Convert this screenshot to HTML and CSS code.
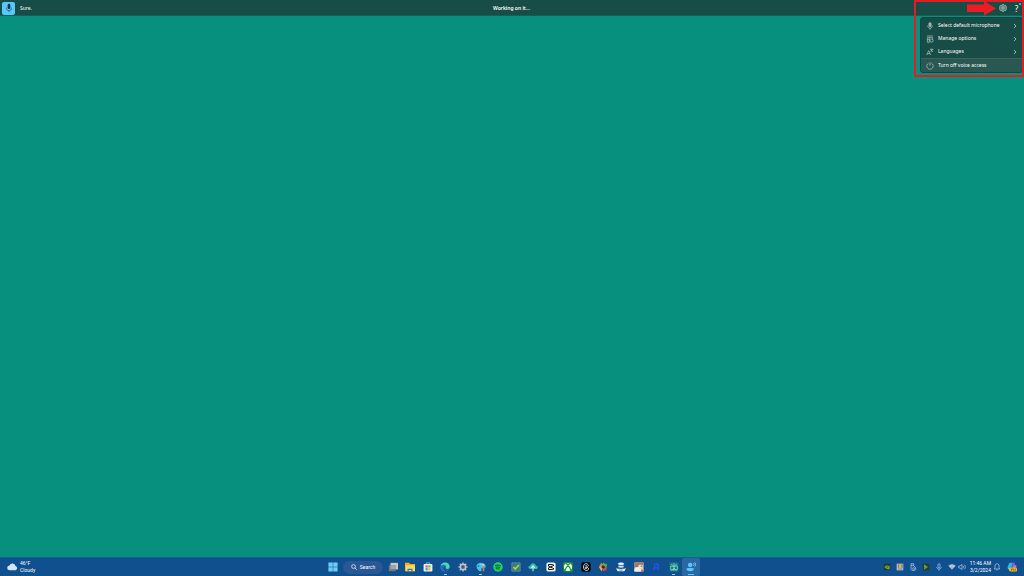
FILE: index.html
```html
<!DOCTYPE html>
<html lang="en">
<head>
<meta charset="utf-8">
<title>Voice access</title>
<link rel="stylesheet" href="styles.css">
</head>
<body>
<div class="desktop">
  <header class="voice-bar">
    <div class="voice-left">
      <button class="mic-button" aria-label="Microphone"><svg class="icon" viewBox="0 0 12 12"><rect x="4.400" y="1" width="3.200" height="6.200" rx="1.600" fill="#123247"/><path d="M3 5.500v.7a3 3 0 0 0 6 0v-.7M6 9.200V11" fill="none" stroke="#246685"/></svg></button>
      <span>Sure.</span>
    </div>
    <strong class="voice-status">Working on it...</strong>
    <div class="voice-right">
      <button class="bar-button" aria-label="Settings"><svg class="icon-8" viewBox="0 0 12 12" fill="none" stroke="#b9cdca"><path d="M4.500 1h3l.6 1.600 1.800-.3 1.500 2.500L10.300 6l1.100 1.200-1.500 2.500-1.800-.3L7.500 11h-3l-.6-1.600-1.800.3L.6 7.200 1.700 6 .6 4.800l1.500-2.500 1.800.3z" fill="#527a75"/><circle cx="6" cy="6" r="1.800"/></svg></button>
      <button class="bar-button help" aria-label="Help">?</button>
    </div>
  </header>

  <main class="workspace"></main>

  <nav class="menu" aria-label="Settings">
    <button class="menu-item"><svg class="icon-8" viewBox="0 0 12 12" fill="none" stroke="#b9cdca"><rect x="4.300" y="1" width="3.400" height="6" rx="1.700" fill="#8fa9a6"/><path d="M2.500 5.500c0 5 7 5 7 0M6 9v2.500"/></svg><span>Select default microphone</span><svg class="chevron" viewBox="0 0 4 6"><path d="m1 1 2 2-2 2" fill="none" stroke="#b9cdca" stroke-width=".8"/></svg></button>
    <button class="menu-item"><svg class="icon-8" viewBox="0 0 12 12" fill="none" stroke="#b9cdca"><path d="M1.500 1.500h9M2 4v7h3M2 4h8v2M5 4v7M2 7h3"/><circle cx="8.500" cy="8.500" r="2.200"/></svg><span>Manage options</span><svg class="chevron" viewBox="0 0 4 6"><path d="m1 1 2 2-2 2" fill="none" stroke="#b9cdca" stroke-width=".8"/></svg></button>
    <button class="menu-item"><svg class="icon-8" viewBox="0 0 12 12" fill="none" stroke="#b9cdca"><path d="M1 10.500 4 4l3 6.500M2 8.500h4M6 2h5M8.500 1v1M7 6l3-4M7.500 3l3 3"/></svg><span>Languages</span><svg class="chevron" viewBox="0 0 4 6"><path d="m1 1 2 2-2 2" fill="none" stroke="#b9cdca" stroke-width=".8"/></svg></button>
    <button class="menu-item menu-off"><svg class="icon-8" viewBox="0 0 12 12" fill="none" stroke="#b9cdca"><path d="M3.800 1.800a4.800 4.800 0 1 0 4.400 0M6 .5v5"/></svg><span>Turn off voice access</span></button>
  </nav>
  <div class="highlight"></div>
  <svg class="arrow" viewBox="0 0 29 16"><path d="M0 4.500h17V1l12 7.500L17 15.500V12H0z" fill="#ed1c24"/></svg>
  <i class="notice"></i>

  <footer class="taskbar">
    <button class="weather"><svg class="weather-icon" viewBox="0 0 12 12"><path d="M3 10a2.600 2.600 0 0 1-.3-5.200 3.500 3.500 0 0 1 6.600.6A2.400 2.400 0 0 1 9.500 10z" fill="#d5e5fb"/></svg><span>46°F<br>Cloudy</span></button>

    <div class="center">
      <button class="start" aria-label="Start"><svg class="icon" viewBox="0 0 12 12" fill="#6bcefa"><path d="M.5.500h5.200v5.200H.500zM6.300.500h5.200v5.200H6.300zM.5 6.300h5.200v5.200H.500zM6.300 6.300h5.200v5.200H6.300z"/></svg></button>
      <button class="search"><svg class="icon-6" viewBox="0 0 12 12" fill="none" stroke="#e2eaf5" stroke-width="1.600"><circle cx="5" cy="5" r="3.800"/><path d="m8 8 3.500 3.500"/></svg><span>Search</span></button>
      <div class="apps">
        <button class="app" aria-label="Task view"><svg class="icon" viewBox="0 0 12 12"><path d="M3 1h9v8H3z" fill="#c9c6c4"/><path d="M1 4h8v7H1z" fill="#77797b"/><path d="M3 4h6v4.500H3z" fill="#a5a4a4"/></svg></button>
        <button class="app" aria-label="File Explorer"><svg class="icon" viewBox="0 0 12 12"><path d="M0 1h5l1 1.500h6V11H0z" fill="#f4b31d"/><path d="M1 4h11v7H1z" fill="#ffd95c"/><path d="M3 11V8h6v3H7.500V9.500h-3V11z" fill="#247bce"/></svg></button>
        <button class="app" aria-label="Microsoft Store"><svg class="icon" viewBox="0 0 12 12"><path d="M4 3V1h4v2" fill="none" stroke="#6cc8f5"/><rect x=".7" y="2.500" width="10.600" height="9" rx="1" fill="#edf1f5"/><path d="M3 4h2.700v2.700H3z" fill="#f05b35"/><path d="M6.300 4H9v2.700H6.300z" fill="#80bb3d"/><path d="M3 7.300h2.700V10H3z" fill="#27a8e8"/><path d="M6.300 7.300H9V10H6.300z" fill="#fbbc2d"/></svg></button>
        <button class="app open" aria-label="Edge"><svg class="icon" viewBox="0 0 12 12"><circle cx="6" cy="6" r="5.500" fill="#168bd7"/><path d="M.8 5C1.500-1 11.500-.5 11.500 5.500 11.500 9 7 9 7 7c2-4-4-5-6.200-2z" fill="#54d5ae"/><path d="M1 5c3-3 7 0 5.500 2-.5 2 2 3 4 2-3 4-9 2-9.500-4z" fill="#1177cb"/><path d="M5 5.500c-2 1-1 4 1 5.500 2 .2 4-1 4.800-2.500-2 1-4.300.5-4.300-1.500 0-1-.5-1.500-1.500-1.500z" fill="#24507e"/></svg></button>
        <button class="app" aria-label="Settings app"><svg class="icon" viewBox="0 0 12 12"><path d="M6 .5v11M.5 6h11M2.100 2.100l7.800 7.800M9.900 2.100 2.100 9.900" stroke="#a8b0ba" stroke-width="2"/><circle cx="6" cy="6" r="3.200" fill="#56697c" stroke="#bdc3c9" stroke-width="1.800"/><circle cx="6" cy="6" r="1.200" fill="#275b99"/></svg></button>
        <button class="app open" aria-label="Paint"><svg class="icon" viewBox="0 0 12 12"><path d="M1 7C-1 2 5-.5 9 1.500c4 2 3 6 0 6H7c-2 1 1 3-1 3.500C4 11.500 2 10 1 7z" fill="#50bce8"/><circle cx="3" cy="5" r="1" fill="#187bc2"/><circle cx="5.500" cy="3" r="1" fill="#96dd8e"/><circle cx="8.500" cy="3.500" r="1" fill="#dceaf4"/><path d="m10 3-2 4v4h2V7z" fill="#d87a3b"/></svg></button>
        <button class="app" aria-label="Spotify"><svg class="icon" viewBox="0 0 12 12"><circle cx="6" cy="6" r="5.700" fill="#1ed760"/><path d="M2.500 4.200c3-.8 5-.5 7 .6M3 6.300c2.500-.6 4-.3 5.800.6M3.300 8.200c2-.4 3.300-.1 4.700.5" fill="none" stroke="#123e2b" stroke-width="1.100"/></svg></button>
        <button class="app" aria-label="Tasks"><svg class="icon" viewBox="0 0 12 12"><path d="M1 1h10v10H1z" fill="#397d78" stroke="#6689a1"/><path d="m3 6 2 2.500 4.500-5" fill="none" stroke="#a9dc3e" stroke-width="1.800"/></svg></button>
        <button class="app" aria-label="Cloud upload"><svg class="icon" viewBox="0 0 12 12"><path d="M2.500 8.500C-.5 8 0 4.500 2.500 4.500 4 0 9 1 9.500 4.500c3 .2 3 3.800 0 4z" fill="#39bba5"/><path d="M6 11V6M3.800 7 6 4.500 8.200 7" fill="none" stroke="#b8fff0" stroke-width="1.300"/></svg></button>
        <button class="app" aria-label="CapCut"><svg class="icon" viewBox="0 0 12 12"><rect x=".5" y=".5" width="11" height="11" rx="2" fill="#f3f3f3"/><path d="M9.500 4 8 3H3v2l6.500 3M9.500 8 8 9H3V7l6.500-3" fill="none" stroke="#171717" stroke-width="1.200"/></svg></button>
        <button class="app" aria-label="Xbox"><svg class="icon" viewBox="0 0 12 12"><rect x=".3" y=".3" width="11.400" height="11.400" rx="1" fill="#149b26"/><circle cx="6" cy="6" r="4.800" fill="#f5fff5"/><path d="M3 2c1 0 2 .6 3 1.300C7 2.600 8 2 9 2M2.500 10C3 7.500 4.500 5.500 6 4.500 7.500 5.500 9 7.500 9.500 10" fill="none" stroke="#149b26" stroke-width="1.500"/></svg></button>
        <button class="app" aria-label="Threads"><svg class="icon" viewBox="0 0 12 12"><rect x=".3" y=".3" width="11.400" height="11.400" rx="2" fill="#080a0d"/><path d="M9 4.500C8 1 3 1 3 6s5.500 5 6 2.500C9.500 6 5 5.500 4.700 7.200 5 9 8 8.200 7.300 5.500 7 4 5.500 4 5 5" fill="none" stroke="#edf0f1"/></svg></button>
        <button class="app" aria-label="Color tools"><svg class="icon" viewBox="0 0 12 12"><circle cx="6" cy="6" r="5.200" fill="#343a3e"/><path d="M1 5 4 1l3 2-3 4z" fill="#d47b50"/><path d="m6 1 5 2-1 4-4-3z" fill="#57ad63"/><path d="m1 6 3 5 2-3-2-3z" fill="#d3bd53"/><path d="m6 7 5-1-1 4-4 1z" fill="#c44d76"/><circle cx="6" cy="6" r="1.800" fill="#282e38"/></svg></button>
        <button class="app" aria-label="Voice recorder"><svg class="icon" viewBox="0 0 12 12"><path d="M2 2c2-2 6-2 8 0L8 4H4z" fill="#eef4fb"/><ellipse cx="6" cy="5.500" rx="3.500" ry="1.500" fill="#c5d8ec"/><path d="M0 7.500c3 1 9 1 12 0L10 11H2z" fill="#e8eff7"/><path d="M4 9.500c1 .5 3 .5 4 0M3 4h6" stroke="#4773a2" fill="none"/></svg></button>
        <button class="app" aria-label="Photo editor"><svg class="icon" viewBox="0 0 12 12"><path d="M.5.500h11v11H.500z" fill="#d9c4b5"/><path d="M.5.500h11v3L7 3 3 6H.500z" fill="#a87561"/><circle cx="7" cy="6" r="2.500" fill="#f1e5d9"/><path d="M.5 8 5 6l2 3 3-1v3.500H.500z" fill="#f4eeea"/><path d="M4 5h1.500M8 5h1.500" stroke="#26384c"/><path d="m8 11.500 1.500-3 2 3z" fill="#bf5634"/></svg></button>
        <button class="app" aria-label="Finder"><svg class="icon-8" viewBox="0 0 12 12" fill="none" stroke="#1d55ed" stroke-width="2"><circle cx="6.500" cy="4.500" r="3"/><path d="m4.500 7-3 3M9.500 2v9"/></svg></button>
        <button class="app open" aria-label="Assistant"><svg class="icon" viewBox="0 0 12 12"><path d="M.5.500h11v11H.500z" fill="#147d83"/><path d="M6 1v10M2.500 2.500 6 5.500l3.500-3M2 5h8v4H2zM3 11l3-4 3 4" fill="none" stroke="#9addd0" stroke-width=".8"/></svg></button>
        <button class="app active" aria-label="Voice access"><svg class="icon" viewBox="0 0 12 12" fill="#58caff"><circle cx="5" cy="3.500" r="2.700"/><path d="M.5 8c0-1 9-1 9 0 0 4-9 4-9 0z"/><path d="M9 1.500c1 1 1 2 0 3M10.500.5c1.500 2 1.500 3 0 5" fill="none" stroke="#93deff"/></svg></button>
      </div>
    </div>

    <div class="tray">
      <button class="tray-item" aria-label="Graphics"><svg class="icon-8" viewBox="0 0 12 12"><path d="M1 1h10v10H1z" fill="#273a2c"/><path d="M2 6c2-3 5-3 8-1v4C6 10 4 8 2 6z" fill="#78a83b"/><path d="M5 6h3" stroke="#20351d"/></svg></button>
      <button class="tray-item" aria-label="PowerToys"><svg class="icon-8" viewBox="0 0 12 12"><path d="M1 1h10v10H1z" fill="#b5bdc2"/><path d="M3 2h2v5H3z" fill="#dd5b43"/><path d="M5 2h2v5H5z" fill="#e3b82c"/><path d="M8 2h2v5H8z" fill="#489856"/><path d="M3 8h7v2H3z" fill="#8a9ba8"/></svg></button>
      <button class="tray-item" aria-label="USB device"><svg class="icon-8" viewBox="0 0 12 12" fill="none" stroke="#c6d4e8"><path d="M3 1h4v3H3zM3 4v6l1.500 1.500h4L10 10V7L7 4"/><circle cx="7" cy="8.500" r="1.500"/></svg></button>
      <button class="tray-item" aria-label="Media"><svg class="icon-8" viewBox="0 0 12 12"><path d="M1 1h10v10H1z" fill="#243f30"/><path d="m3 2 6 4-6 4z" fill="#719931"/></svg></button>
      <button class="tray-item" aria-label="Mic in use"><svg class="icon-8" viewBox="0 0 12 12" fill="none" stroke="#8abfe9" stroke-width="1.300"><rect x="4.500" y="1" width="3" height="6" rx="1.500"/><path d="M2.500 6c0 4 7 4 7 0M6 9v2.500"/></svg></button>
      <button class="network" aria-label="Network and sound"><svg class="icon-8" viewBox="0 0 12 12"><path d="M.5 4c3-3 8-3 11 0L6 10z" fill="#9db9d9"/><path d="M2.500 6c2-2 5-2 7 0" stroke="#d4e0ed" fill="none"/></svg><svg class="icon-8" viewBox="0 0 12 12" fill="none" stroke="#bacce1"><path d="M1 4.500h2L6 2v8L3 7.500H1zM7.500 4c1 1 1 3 0 4M9.500 2.500c2 2 2 5 0 7"/></svg></button>
      <button class="clock">11:46 AM<br>3/2/2024</button>
      <button class="bell" aria-label="Notifications"><svg class="icon-8" viewBox="0 0 12 12" fill="none" stroke="#c8d8eb"><path d="M2 9h8L9 7V4.500C9 0 3 0 3 4.500V7zM5 10.500h2"/></svg></button>
      <button class="copilot" aria-label="Copilot"><svg class="icon" viewBox="0 0 12 12"><path d="M3 1h4L5 8H1C0 7 2 2 3 1z" fill="#36acdf"/><path d="M6 1h3l1 3H6z" fill="#5374e6"/><path d="M7 4h4c1 1-1 6-2 7H5z" fill="#de6baf"/><path d="M1 7h5l-1 4H3z" fill="#a9ce55"/><rect x="4" y="7" width="8" height="4.500" rx="1" fill="#efb52b"/><path d="M5.500 8v2.500M5.500 8.500h1.500M8 8v2.500M10 8v2.500" stroke="#57451c" stroke-width=".7"/></svg></button>
    </div>
  </footer>
</div>
</body>
</html>
```
FILE: styles.css
```css
* { box-sizing: border-box; }

body {
  margin: 0;
  font-family: "Noto Sans", "Open Sans", sans-serif;
  font-size: 5px;
  line-height: 7px;
  color: #fff;
}

button {
  display: flex;
  align-items: center;
  justify-content: center;
  margin: 0;
  padding: 0;
  border: 0;
  background: none;
  color: inherit;
  font: inherit;
}

svg { display: block; flex: none; }
.icon { width: 10px; height: 10px; }
.icon-8 { width: 8px; height: 8px; }
.icon-6 { width: 6px; height: 6px; }

.desktop {
  position: relative;
  display: flex;
  flex-direction: column;
  min-height: 100vh;
  background: #08907e;
}

.voice-bar {
  display: grid;
  grid-template-columns: 1fr auto 1fr;
  align-items: center;
  height: 16px;
  padding: 1px 3px 0 2px;
  background: #184c46;
  border-bottom: 1px solid #126056;
}

.voice-left { display: flex; align-items: center; gap: 5px; }
.mic-button { width: 13px; height: 13px; border-radius: 2px; background: #59c7fa; }
.voice-status { font-weight: 600; }
.voice-right { display: flex; justify-content: flex-end; gap: 5px; }
.bar-button { width: 9px; height: 12px; }
.help { font-size: 8px; }

.workspace { flex: 1; }

.menu {
  position: absolute;
  top: 17px;
  right: 1px;
  width: 103px;
  padding-top: 1px;
  border: 1px solid #14433e;
  border-radius: 3px;
  background: #184c46;
  overflow: hidden;
}

.menu-item {
  justify-content: flex-start;
  gap: 4px;
  width: 100%;
  height: 13px;
  padding: 0 5px;
  text-align: left;
}

.menu-off { height: 14px; background: #2a5751; border-top: 1px solid #3c645f; }
.chevron { width: 4px; height: 6px; margin-left: auto; }

.highlight {
  position: absolute;
  top: 0;
  right: 0;
  width: 110px;
  height: 77px;
  border: 2px solid #e31b23;
}

.arrow { position: absolute; top: 0; right: 28px; width: 29px; height: 16px; }

.notice {
  position: absolute;
  top: 3px;
  right: 3px;
  width: 2px;
  height: 2px;
  border-radius: 1px;
  background: #4cc2ff;
}

.taskbar {
  display: grid;
  grid-template-columns: 1fr auto 1fr;
  height: 19px;
  background: #10508f;
  border-top: 1px solid #1b5e91;
  font-family: Roboto, "Open Sans", sans-serif;
}

.weather { justify-content: flex-start; gap: 2px; padding: 0 0 1px 7px; text-align: left; }
.weather-icon { width: 11px; height: 11px; }

.center { display: flex; align-items: center; }
.start { width: 18px; height: 18px; }
.search { gap: 3px; width: 40px; height: 13px; margin: 0 1px; border-radius: 7px; background: #2b5795; }
.apps { display: grid; grid-template-columns: repeat(18, 1fr); width: 316px; }
.app { position: relative; height: 18px; }
.active { border-radius: 2px; background: #2a68a1; }

.open::after,
.active::after {
  content: "";
  position: absolute;
  bottom: 1px;
  width: 3px;
  height: 1px;
  background: #a8bed5;
}

.active::after { width: 6px; background: #59c7fa; }

.tray { display: flex; justify-content: flex-end; padding-right: 7px; }
.tray-item { width: 13px; }
.network { gap: 2px; width: 23px; }
.clock { width: 23px; text-align: right; justify-content: flex-end; }
.bell { width: 11px; }
.copilot { width: 15px; justify-content: flex-end; }
```
